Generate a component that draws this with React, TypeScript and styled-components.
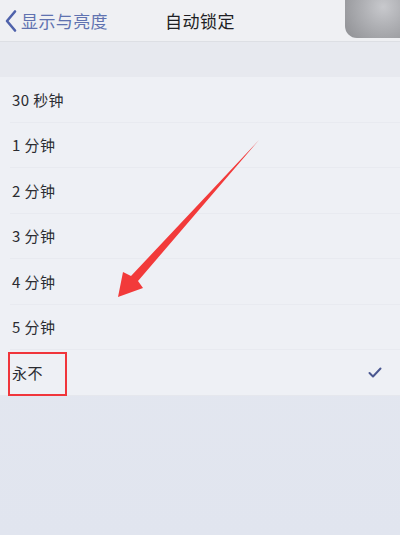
import React from "react";
import styled, { createGlobalStyle } from "styled-components";

const Global = createGlobalStyle`
  html, body { margin: 0; padding: 0; }
  body { width: 400px; height: 535px; overflow: hidden; background: #e3e6ef;
    font-family: "Noto Sans CJK SC", "Liberation Sans", sans-serif; }
`;

const Screen = styled.div`
  position: relative;
  width: 400px;
  height: 535px;
  background: linear-gradient(#e6e9f0, #e1e5ef);
  display: flex;
  flex-direction: column;
  overflow: hidden;
`;

const NavBar = styled.div`
  height: 42px;
  box-sizing: border-box;
  background: #eff0f3;
  border-bottom: 1px solid #dddfe4;
  display: flex;
  align-items: center;
  position: relative;
  flex-shrink: 0;
`;

const Back = styled.div`
  display: flex;
  align-items: center;
  gap: 4px;
  padding-left: 5px;
  color: #6072b0;
  font-size: 17px;
  letter-spacing: 0.4px;
`;

const Title = styled.div`
  position: absolute;
  left: 0;
  right: 0;
  text-align: center;
  font-size: 17px;
  color: #1e1f24;
  pointer-events: none;
  letter-spacing: 0.5px;
`;

const Gap = styled.div`
  height: 35px;
  background: #e7e9ef;
  flex-shrink: 0;
`;

const List = styled.div`
  background: #eef0f5;
  display: flex;
  flex-direction: column;
`;

const Row = styled.div<{ last?: boolean }>`
  height: 45.5px;
  box-sizing: border-box;
  margin-left: ${(p) => (p.last ? "0" : "10px")};
  padding-left: ${(p) => (p.last ? "12px" : "2px")};
  padding-right: 16px;
  display: flex;
  align-items: center;
  justify-content: space-between;
  border-bottom: 1px solid ${(p) => (p.last ? "#e5e7ed" : "#e8eaf0")};
  font-size: 15px;
  color: #2b2c31;
  letter-spacing: 0.4px;
`;

const Check = styled.svg`
  width: 14px;
  height: 11px;
  margin-right: 2px;
`;

const Assist = styled.div`
  position: absolute;
  left: 345px;
  top: -14px;
  width: 66px;
  height: 52px;
  border-radius: 12px;
  background: radial-gradient(circle at 58% 40%, #c8c9cd 0%, #b0b1b5 40%, #8e8f93 100%);
`;

const RedBox = styled.div`
  position: absolute;
  left: 8px;
  top: 352px;
  width: 55px;
  height: 40px;
  border: 2px solid #f0353b;
`;

const Arrow = styled.svg`
  position: absolute;
  left: 0;
  top: 0;
  width: 400px;
  height: 535px;
  pointer-events: none;
`;

const items = ["30 秒钟", "1 分钟", "2 分钟", "3 分钟", "4 分钟", "5 分钟"];

export default function App() {
  return (
    <Screen>
      <Global />
      <NavBar>
        <Back>
          <svg width="12" height="24" viewBox="0 0 12 24">
            <path d="M10 2.5 L2 12 L10 21.5" fill="none" stroke="#4f62ab" strokeWidth="2.6" strokeLinecap="round" strokeLinejoin="round" />
          </svg>
          <span>显示与亮度</span>
        </Back>
        <Title>自动锁定</Title>
      </NavBar>
      <Gap />
      <List>
        {items.map((t) => (
          <Row key={t}>{t}</Row>
        ))}
        <Row last>
          <span>永不</span>
          <Check viewBox="0 0 14 11">
            <path d="M1.5 6 L5 9.5 L12.5 1.5" fill="none" stroke="#4a5790" strokeWidth="2" strokeLinecap="round" strokeLinejoin="round" />
          </Check>
        </Row>
      </List>
      <Assist />
      <RedBox />
      <Arrow viewBox="0 0 400 535">
        <path d="M259 140 L138 281 L143 288 L118 297 L123 272 L131 276 Z" fill="#f23a3a" />
      </Arrow>
    </Screen>
  );
}
